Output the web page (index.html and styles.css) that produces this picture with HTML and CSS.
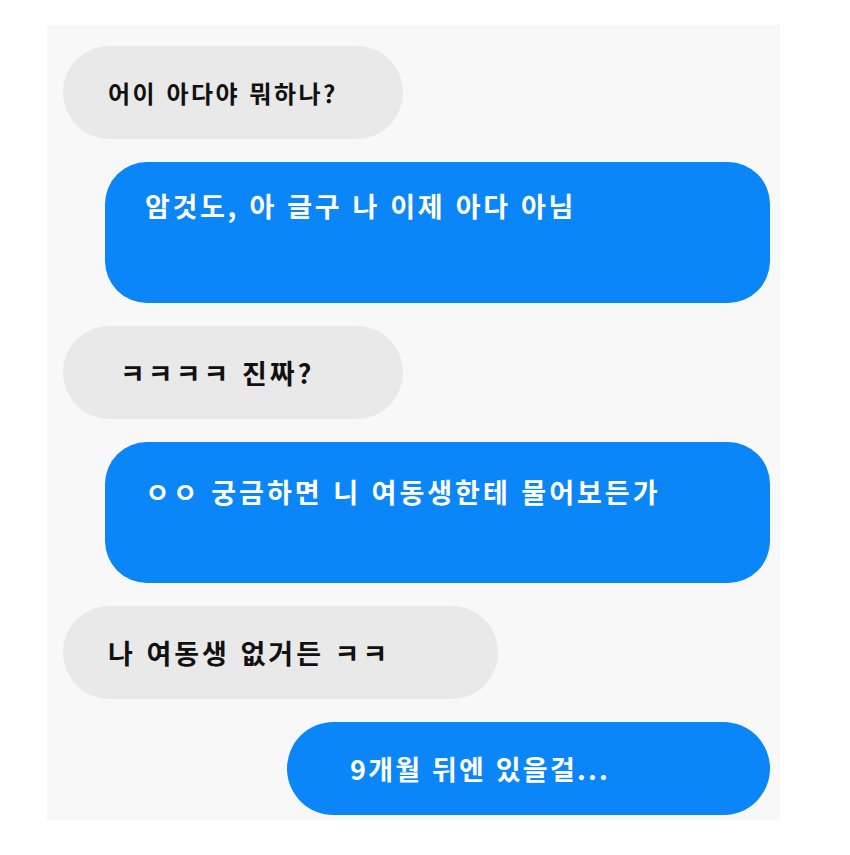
FILE: index.html
```html
<html lang="ko">

<head>
    <meta charset="UTF-8">
    <meta name="viewport" content="width=device-width, initial-scale=1.0">
    <title>대화</title>
    <link rel="stylesheet" href="styles.css">
</head>

<body>
    <div class="chat">
        <div class="bubble them w-short small">어이 아다야 뭐하나?</div>
        <div class="bubble me tall">암것도, 아 글구 나 이제 아다 아님</div>
        <div class="bubble them w-short indent">ㅋㅋㅋㅋ 진짜?</div>
        <div class="bubble me tall lower">ㅇㅇ 궁금하면 니 여동생한테 물어보든가</div>
        <div class="bubble them w-long">나 여동생 없거든 ㅋㅋ</div>
        <div class="bubble me short">9개월 뒤엔 있을걸...</div>
    </div>
</body>

</html>
```

FILE: styles.css
```css
body {
    margin: 0;
    background-color: #fff;
    font-family: "Noto Sans CJK KR", "Noto Sans", sans-serif;
}

.chat {
    margin: 25px 0 0 47px;
    width: 733px;
    height: 795px;
    box-sizing: border-box;
    padding: 21px 10px 0 16px;
    background-color: #f8f8f8;
    display: flex;
    flex-direction: column;
    gap: 23px;
}

.bubble {
    box-sizing: border-box;
    display: flex;
    font-size: 27px;
    line-height: 34px;
    font-weight: 700;
}

.them {
    align-self: flex-start;
    height: 93px;
    align-items: center;
    padding-left: 45px;
    border-radius: 47px;
    background-color: #e9e9e9;
    color: #111;
    letter-spacing: 3px;
}

.them.small {
    font-size: 24px;
    letter-spacing: 2.5px;
}

.them.indent {
    padding-left: 57px;
}

.w-short {
    width: 340px;
}

.w-long {
    width: 435px;
}

.me {
    align-self: flex-end;
    background-color: #0a86f8;
    color: #fff;
    letter-spacing: 2.7px;
}

.me.tall {
    width: 665px;
    height: 141px;
    padding: 27px 0 0 40px;
    border-radius: 42px;
    align-items: flex-start;
}

.me.tall.lower {
    padding-top: 33px;
    letter-spacing: 3px;
}

.me.short {
    width: 483px;
    height: 93px;
    padding-left: 63px;
    border-radius: 47px;
    align-items: center;
    letter-spacing: 2.2px;
}
```
